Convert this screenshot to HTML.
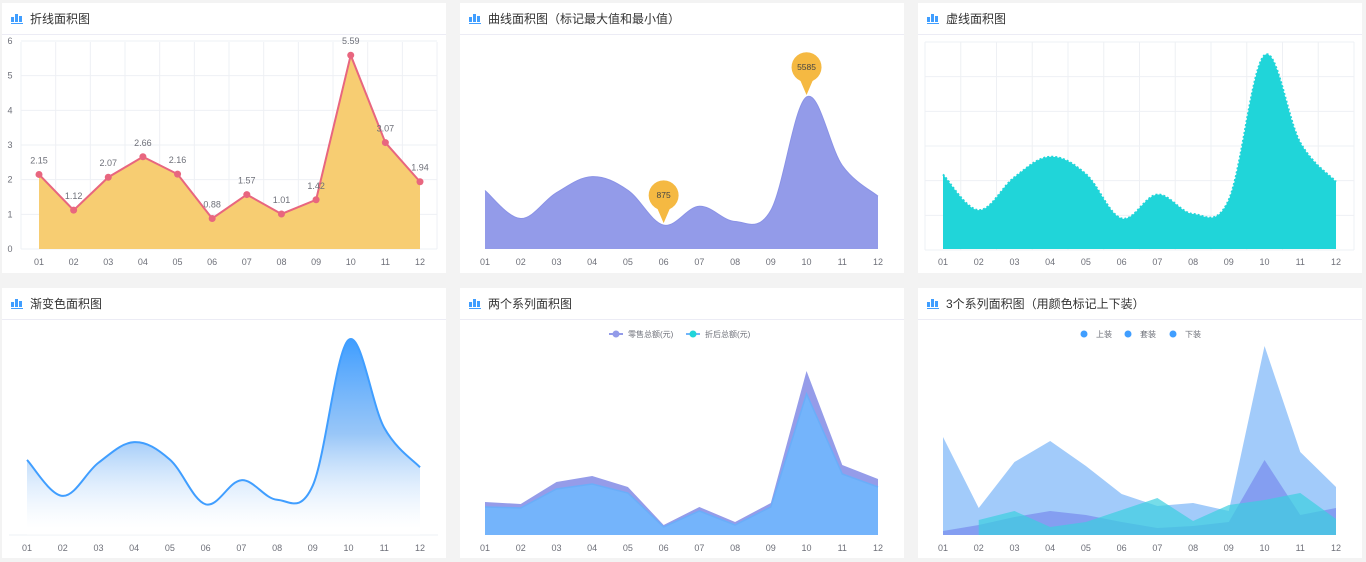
<!DOCTYPE html>
<html><head><meta charset="utf-8"><style>
*{margin:0;padding:0;box-sizing:border-box}
body{width:1366px;height:562px;background:#f3f3f3;position:relative;overflow:hidden;font-family:"Liberation Sans","Noto Sans CJK SC",sans-serif}
.p{position:absolute;width:444px;height:270px;background:#fff}
.t{height:32px;border-bottom:1px solid #ececf5;font-size:12px;color:#333;line-height:32px;padding-left:28px;position:relative}
.ic{position:absolute;left:9px;top:10px;width:12px;height:11px}
.ic i{position:absolute;bottom:2px;width:3px;background:#409eff}
.ic b{position:absolute;bottom:0;left:0;width:12px;height:1.5px;background:#409eff}
svg{position:absolute;left:0;top:0}
svg text{font-family:"Liberation Sans","Noto Sans CJK SC",sans-serif;font-size:9px;fill:#6e7079}
</style></head><body>
<svg id="s" width="1366" height="562"></svg>
<div class="p" style="left:2px;top:3px"><div class="t"><span class="ic"><i style="left:0;height:5px"></i><i style="left:4px;height:8px"></i><i style="left:8px;height:6px"></i><b></b></span>折线面积图</div></div>
<div class="p" style="left:460px;top:3px"><div class="t"><span class="ic"><i style="left:0;height:5px"></i><i style="left:4px;height:8px"></i><i style="left:8px;height:6px"></i><b></b></span>曲线面积图（标记最大值和最小值）</div></div>
<div class="p" style="left:918px;top:3px"><div class="t"><span class="ic"><i style="left:0;height:5px"></i><i style="left:4px;height:8px"></i><i style="left:8px;height:6px"></i><b></b></span>虚线面积图</div></div>
<div class="p" style="left:2px;top:288px"><div class="t"><span class="ic"><i style="left:0;height:5px"></i><i style="left:4px;height:8px"></i><i style="left:8px;height:6px"></i><b></b></span>渐变色面积图</div></div>
<div class="p" style="left:460px;top:288px"><div class="t"><span class="ic"><i style="left:0;height:5px"></i><i style="left:4px;height:8px"></i><i style="left:8px;height:6px"></i><b></b></span>两个系列面积图</div></div>
<div class="p" style="left:918px;top:288px"><div class="t"><span class="ic"><i style="left:0;height:5px"></i><i style="left:4px;height:8px"></i><i style="left:8px;height:6px"></i><b></b></span>3个系列面积图（用颜色标记上下装）</div></div>
<svg id="c" width="1366" height="562"></svg>
<script>
var D=[2.15,1.12,2.07,2.66,2.16,0.88,1.57,1.01,1.42,5.59,3.07,1.94];
var L=['01','02','03','04','05','06','07','08','09','10','11','12'];
var o='';
function xs(a,b){var r=[];for(var i=0;i<12;i++)r.push(a+(b-a)*i/11);return r}
function lin(X,Y){var s='M'+X[0]+','+Y[0];for(var i=1;i<X.length;i++)s+='L'+X[i]+','+Y[i];return s}
function sm(X,Y){var s='M'+X[0]+','+Y[0];for(var i=0;i<X.length-1;i++){var p0=i?i-1:i,p3=i+2<X.length?i+2:i+1;var t=0.35;
var c1x=X[i]+(X[i+1]-X[p0])*t/2*1.0,c1y=Y[i]+(Y[i+1]-Y[p0])*t/2,c2x=X[i+1]-(X[p3]-X[i])*t/2,c2y=Y[i+1]-(Y[p3]-Y[i])*t/2;
s+='C'+c1x+','+c1y+' '+c2x+','+c2y+' '+X[i+1]+','+Y[i+1]}return s}
function close(X,b){return 'L'+X[X.length-1]+','+b+'L'+X[0]+','+b+'Z'}
function xl(X,y){var s='';for(var i=0;i<12;i++)s+='<text x="'+X[i]+'" y="'+y+'" text-anchor="middle">'+L[i]+'</text>';return s}
// panel1
var X=xs(39,420),Y=D.map(function(v){return 249-v*34.67});
for(var k=0;k<=6;k++){var y=249-k*34.67;o+='<line x1="21" x2="437" y1="'+y+'" y2="'+y+'" stroke="#eef0f4"/><text x="10" y="'+(y+3)+'" text-anchor="middle">'+k+'</text>'}
for(var k=0;k<=12;k++){var x=21+k*34.67;o+='<line x1="'+x+'" x2="'+x+'" y1="42" y2="249" stroke="#eef0f4"/>'}
o+='<path d="'+lin(X,Y)+close(X,249)+'" fill="#f7cd72"/><path d="'+lin(X,Y)+'" fill="none" stroke="#e8667f" stroke-width="2"/>';
for(var i=0;i<12;i++)o+='<circle cx="'+X[i]+'" cy="'+Y[i]+'" r="3.5" fill="#e8667f"/><text x="'+X[i]+'" y="'+(Y[i]-11)+'" text-anchor="middle">'+D[i]+'</text>';
o+=xl(X,265);
// panel2
X=xs(485,878);Y=D.map(function(v){return 249-v*27.2});
o+='<path d="'+sm(X,Y)+close(X,249)+'" fill="#939be9"/><path d="'+sm(X,Y)+'" fill="none" stroke="#8a92e6" stroke-width="1"/>'+xl(X,265);
function pin(x,y,t){return '<path d="M'+x+','+y+' L'+(x-6)+','+(y-14)+' A15,15 0 1 1 '+(x+6)+','+(y-14)+' Z" fill="#f5b942"/><text x="'+x+'" y="'+(y-25)+'" text-anchor="middle" style="font-size:8.5px;fill:#444">'+t+'</text>'}
o+=pin(X[5],Y[5]-2,'875')+pin(X[9],Y[9]-2,'5585');
// panel3
X=xs(943,1336);Y=D.map(function(v){return 249-v*34.67});
for(var k=0;k<=6;k++){var y=250-k*34.67;o+='<line x1="925" x2="1354" y1="'+y+'" y2="'+y+'" stroke="#eef0f4"/>'}
for(var k=0;k<=12;k++){var x=925+k*35.75;o+='<line x1="'+x+'" x2="'+x+'" y1="42" y2="250" stroke="#eef0f4"/>'}
o+='<path d="'+sm(X,Y)+close(X,249)+'" fill="#20d5d9"/><path d="'+sm(X,Y)+'" fill="none" stroke="#20d5d9" stroke-width="2" stroke-dasharray="2,2"/>'+xl(X,265);
// panel4
X=xs(27,420);Y=D.map(function(v){return 535-v*34.9});
o+='<defs><linearGradient id="g" x1="0" y1="340" x2="0" y2="528" gradientUnits="userSpaceOnUse"><stop offset="0" stop-color="#409eff"/><stop offset="0.5" stop-color="#7fb8f6" stop-opacity="0.8"/><stop offset="1" stop-color="#fff" stop-opacity="0.3"/></linearGradient></defs>';
o+='<line x1="9" x2="438" y1="535" y2="535" stroke="#eef0f4"/><path d="'+sm(X,Y)+close(X,535)+'" fill="url(#g)"/><path d="'+sm(X,Y)+'" fill="none" stroke="#409eff" stroke-width="2"/>'+xl(X,551);
// panel5
X=xs(485,878);
var A=[502,504,482,476,487,525,507,522,503,371,465,479],B=[507,508,489,484,493,527,511,525,507,394,474,487];
o+='<path d="'+lin(X,A)+close(X,535)+'" fill="#959ce9"/><path d="'+lin(X,B)+close(X,535)+'" fill="#74b4fb"/><path d="'+lin(X,B)+'" fill="none" stroke="#6aaef9" stroke-width="1.5"/>'+xl(X,551);
o+='<line x1="609" x2="623" y1="334" y2="334" stroke="#939be9" stroke-width="2"/><circle cx="616" cy="334" r="3.5" fill="#939be9"/><text x="628" y="337" style="font-size:8px">零售总额(元)</text>';
o+='<line x1="686" x2="700" y1="334" y2="334" stroke="#74b4fb" stroke-width="2"/><circle cx="693" cy="334" r="3.5" fill="#20d5d9"/><text x="705" y="337" style="font-size:8px">折后总额(元)</text>';
// panel6
X=xs(943,1336);
var P=[437,508,462,441,466,494,506,503,511,346,452,487],Q=[531,525,517,511,515,522,528,526,522,460,515,508],R=[null,520,511,527,522,510,498,521,505,500,493,519];
o+='<path d="'+lin(X,P)+close(X,535)+'" fill="#a2cbfa"/><path d="'+lin(X,Q)+close(X,535)+'" fill="#7a8fed" fill-opacity="0.75"/>';
var X2=X.slice(1),R2=R.slice(1);o+='<path d="'+lin(X2,R2)+close(X2,535)+'" fill="#3ccfdf" fill-opacity="0.7"/>'+xl(X,551);
[[1084,'上装'],[1128,'套装'],[1173,'下装']].forEach(function(a){o+='<circle cx="'+a[0]+'" cy="334" r="3.5" fill="#409eff"/><text x="'+(a[0]+12)+'" y="337" style="font-size:8px">'+a[1]+'</text>'});
document.getElementById('c').innerHTML=o;
</script>
</body></html>
